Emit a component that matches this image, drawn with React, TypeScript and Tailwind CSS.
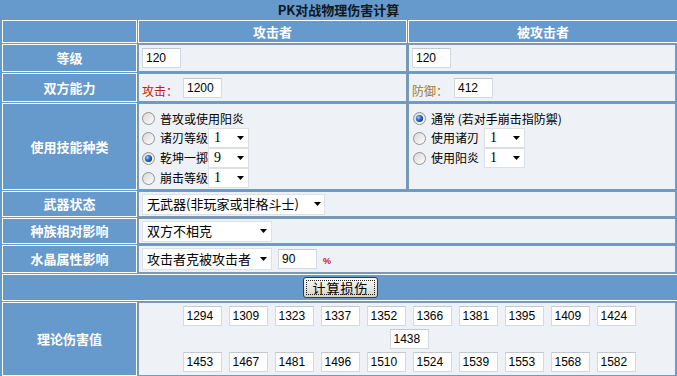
import React from "react";

const CJK = "font-['Noto_Sans_CJK_SC',sans-serif]";

function Radio({ checked }: { checked?: boolean }) {
  return (
    <svg width="13" height="13" viewBox="0 0 13 13" className="shrink-0">
      <defs>
        <linearGradient id="rg" x1="0" y1="0" x2="1" y2="1">
          <stop offset="0" stopColor="#d6d6d6" />
          <stop offset="1" stopColor="#ffffff" />
        </linearGradient>
        <radialGradient id="rd" cx="0.35" cy="0.35" r="0.7">
          <stop offset="0" stopColor="#9fd0ff" />
          <stop offset="0.5" stopColor="#2f6fc0" />
          <stop offset="1" stopColor="#173f7a" />
        </radialGradient>
      </defs>
      <circle cx="6.5" cy="6.5" r="6" fill="url(#rg)" stroke="#929292" />
      {checked && <circle cx="6.5" cy="6.5" r="3.6" fill="url(#rd)" />}
    </svg>
  );
}

function Tri() {
  return (
    <svg width="7" height="4" viewBox="0 0 7 4" className="shrink-0">
      <path d="M0 0H7L3.5 4Z" fill="#000" />
    </svg>
  );
}

function SmallSel({ v }: { v: string }) {
  return (
    <div className="flex h-[20px] w-[41px] shrink-0 items-center justify-between border border-[#dde1e7] bg-white pl-[5px] pr-[4px]">
      <span className="font-['Liberation_Serif',serif] text-[14px] leading-none text-black">{v}</span>
      <Tri />
    </div>
  );
}

function Box({ v }: { v: string }) {
  return (
    <div className="flex h-[20px] w-[39px] shrink-0 items-center border border-[#d3d9e0] border-t-[#c2c8d0] bg-white pl-[3px] font-['Liberation_Sans',sans-serif] text-[12px] text-black">
      {v}
    </div>
  );
}

const Label = ({ children }: { children?: React.ReactNode }) => (
  <div className="flex items-center justify-center border border-white text-[13px] font-bold text-white">
    {children}
  </div>
);

const row1 = ["1294", "1309", "1323", "1337", "1352", "1366", "1381", "1395", "1409", "1424"];
const row3 = ["1453", "1467", "1481", "1496", "1510", "1524", "1539", "1553", "1568", "1582"];

export default function App() {
  return (
    <div className={`h-[376px] w-[677px] overflow-hidden bg-[#6699cc] text-[12px] text-black ${CJK}`}>
      <div className="flex h-[20px] items-center justify-center text-[13px] font-bold text-[#101820]">
        PK对战物理伤害计算
      </div>
      <div className="grid grid-cols-[135px_269px_270px] grid-rows-[23px_28px_29px_87px_26px_26px_28px_27px_74px] gap-[1px] pl-[2px]">
        {/* header */}
        <Label />
        <Label>攻击者</Label>
        <Label>被攻击者</Label>

        {/* level */}
        <Label>等级</Label>
        <div className="flex items-center border border-[#7b9ab5] bg-[#eef2f7] pl-[3px]">
          <Box v="120" />
        </div>
        <div className="mr-[2px] flex items-center border border-[#7b9ab5] bg-[#eef2f7] pl-[3px]">
          <Box v="120" />
        </div>

        {/* abilities */}
        <Label>双方能力</Label>
        <div className="flex items-center border border-[#7b9ab5] bg-[#eef2f7] pl-[3px]">
          <span className="mt-[6px] w-[41px] text-[#c41a1a]">攻击：</span>
          <Box v="1200" />
        </div>
        <div className="mr-[2px] flex items-center border border-[#7b9ab5] bg-[#eef2f7] pl-[3px]">
          <span className="mt-[6px] w-[42px] text-[#a0782a]">防御：</span>
          <Box v="412" />
        </div>

        {/* skills */}
        <Label>使用技能种类</Label>
        <div className="flex flex-col border border-[#7b9ab5] bg-[#eef2f7] pl-[3px] pt-[5px]">
          <div className="flex h-[19px] items-center">
            <Radio />
            <span className="ml-[5px]">普攻或使用阳炎</span>
          </div>
          <div className="flex h-[20px] items-center">
            <Radio />
            <span className="ml-[5px] w-[48px]">诸刃等级</span>
            <SmallSel v="1" />
          </div>
          <div className="flex h-[20px] items-center">
            <Radio checked />
            <span className="ml-[5px] w-[48px] overflow-hidden whitespace-nowrap">乾坤一掷</span>
            <SmallSel v="9" />
          </div>
          <div className="flex h-[20px] items-center">
            <Radio />
            <span className="ml-[5px] w-[48px]">崩击等级</span>
            <SmallSel v="1" />
          </div>
        </div>
        <div className="mr-[2px] flex flex-col border border-[#7b9ab5] bg-[#eef2f7] pl-[4px] pt-[5px]">
          <div className="flex h-[19px] items-center">
            <Radio checked />
            <span className="ml-[5px]">通常 (若对手崩击指防禦)</span>
          </div>
          <div className="flex h-[20px] items-center">
            <Radio />
            <span className="ml-[5px] w-[53px]">使用诸刃</span>
            <SmallSel v="1" />
          </div>
          <div className="flex h-[20px] items-center">
            <Radio />
            <span className="ml-[5px] w-[53px]">使用阳炎</span>
            <SmallSel v="1" />
          </div>
        </div>

        {/* weapon */}
        <Label>武器状态</Label>
        <div className="col-span-2 mr-[2px] flex items-center border border-[#7b9ab5] bg-[#eef2f7] pl-[3px]">
          <div className="flex h-[21px] w-[183px] items-center justify-between border border-[#dde1e7] bg-white pl-[4px] pr-[3px] text-[13px]">
            <span>无武器(非玩家或非格斗士)</span>
            <Tri />
          </div>
        </div>

        {/* race */}
        <Label>种族相对影响</Label>
        <div className="col-span-2 mr-[2px] flex items-center border border-[#7b9ab5] bg-[#eef2f7] pl-[3px]">
          <div className="flex h-[21px] w-[130px] items-center justify-between border border-[#dde1e7] bg-white pl-[4px] pr-[4px] text-[13px]">
            <span>双方不相克</span>
            <Tri />
          </div>
        </div>

        {/* crystal */}
        <Label>水晶属性影响</Label>
        <div className="col-span-2 mr-[2px] flex items-center border border-[#7b9ab5] bg-[#eef2f7] pl-[3px]">
          <div className="flex h-[22px] w-[130px] items-center justify-between border border-[#dde1e7] bg-white pl-[4px] pr-[4px] text-[13px]">
            <span>攻击者克被攻击者</span>
            <Tri />
          </div>
          <div className="ml-[6px]">
            <Box v="90" />
          </div>
          <span className="ml-[6px] mt-[5px] font-['Liberation_Sans',sans-serif] text-[9px] font-bold text-[#d01010]">%</span>
        </div>

        {/* button */}
        <div className="col-span-3 flex items-center justify-center border border-white pl-[1px]">
          <button className="flex h-[21px] w-[75px] items-center justify-center rounded-[3px] border border-[#3a3a3a] bg-linear-to-b from-[#fbfbf8] to-[#d6d3c8] p-[2px]">
            <span className="flex h-full w-full items-center justify-center border border-dotted border-[#222] text-[13px] tracking-[1px] text-black">
              计算损伤
            </span>
          </button>
        </div>

        {/* results */}
        <Label>理论伤害值</Label>
        <div className="col-span-2 mr-[2px] flex flex-col items-center gap-[3px] border border-[#7b9ab5] bg-[#eef2f7] pl-[4px] pt-[3px]">
          <div className="flex gap-[7px]">
            {row1.map((v) => (
              <Box key={v} v={v} />
            ))}
          </div>
          <div className="flex gap-[7px]">
            <Box v="1438" />
          </div>
          <div className="flex gap-[7px]">
            {row3.map((v) => (
              <Box key={v} v={v} />
            ))}
          </div>
        </div>
      </div>
    </div>
  );
}
